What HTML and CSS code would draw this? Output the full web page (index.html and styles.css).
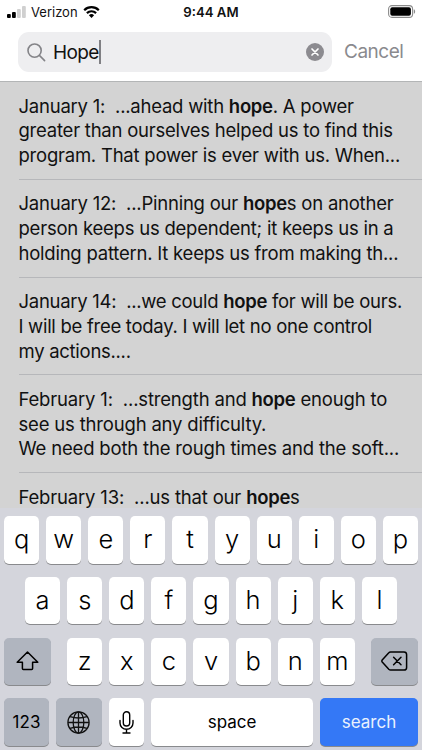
FILE: index.html
```html
<!DOCTYPE html>
<html lang="en">
<head>
<meta charset="utf-8">
<title>Search</title>
<link rel="stylesheet" href="styles.css">
</head>
<body>

<div class="phone">
  <header class="top">
    <div class="status-bar">
      <div class="carrier">
        <svg class="signal" width="19" height="12" viewBox="0 0 19 12">
          <rect x="0" y="8" width="3.8" height="4" rx="1"/>
          <rect x="5" y="6" width="3.8" height="6" rx="1"/>
          <rect x="10" y="3" width="3.8" height="9" rx="1" fill="#d0d0d0"/>
          <rect x="15" y="0" width="3.8" height="12" rx="1" fill="#d0d0d0"/>
        </svg>
        <span>Verizon</span>
        <svg class="wifi" width="17" height="12" viewBox="0 0 17 12">
          <path d="M1.2 4.2a10.4 10.4 0 0 1 14.6 0M3.9 7.1a6.6 6.6 0 0 1 9.2 0" fill="none" stroke="#000" stroke-width="2.2"/>
          <path d="M8.5 12 5.9 9.3a3.7 3.7 0 0 1 5.2 0z"/>
        </svg>
      </div>
      <div class="clock">9:44 AM</div>
      <svg class="battery" width="28" height="13" viewBox="0 0 28 13">
        <rect x=".6" y=".6" width="24" height="11.8" rx="3.4" fill="none" stroke="#8b8b8b" stroke-width="1.1"/>
        <rect x="2.3" y="2.3" width="20.6" height="8.4" rx="1.9"/>
        <path d="M25.8 4.2c1.8.6 1.8 4 0 4.6z" fill="#8b8b8b"/>
      </svg>
    </div>
    <div class="search-row">
      <div class="search-field">
        <svg class="magnifier" width="19" height="19" viewBox="0 0 19 19" fill="none" stroke="#848488" stroke-width="1.6" stroke-linecap="round">
          <circle cx="7.6" cy="7.6" r="6.6"/>
          <path d="M12.4 12.4 17.6 17.6"/>
        </svg>
        <span class="query">Hope</span>
        <span class="caret"></span>
        <svg class="clear" width="18" height="18" viewBox="0 0 18 18">
          <circle cx="9" cy="9" r="9" fill="#8c8b90"/>
          <path d="M6 6l6 6M12 6l-6 6" stroke="#fff" stroke-width="1.7" stroke-linecap="round"/>
        </svg>
      </div>
      <span class="cancel">Cancel</span>
    </div>
  </header>

  <main class="results">
    <p class="result">January 1:&nbsp; ...ahead with <b>hope</b>. A power<br>greater than ourselves helped us to find this<br>program. That power is ever with us. When...</p>
    <p class="result">January 12:&nbsp; ...Pinning our <b>hope</b>s on another<br>person keeps us dependent; it keeps us in a<br>holding pattern. It keeps us from making th...</p>
    <p class="result tight">January 14:&nbsp; ...we could <b>hope</b> for will be ours.<br>I will be free today. I will let no one control<br>my actions....</p>
    <p class="result loose">February 1:&nbsp; ...strength and <b>hope</b> enough to<br>see us through any difficulty.<br>We need both the rough times and the soft...</p>
    <p class="result loose">February 13:&nbsp; ...us that our <b>hope</b>s</p>
  </main>

  <div class="keyboard">
    <div class="keys">
      <span class="key">q</span><span class="key">w</span><span class="key">e</span><span class="key">r</span><span class="key">t</span><span class="key">y</span><span class="key">u</span><span class="key">i</span><span class="key">o</span><span class="key">p</span>
    </div>
    <div class="keys">
      <span class="key">a</span><span class="key">s</span><span class="key">d</span><span class="key">f</span><span class="key">g</span><span class="key">h</span><span class="key">j</span><span class="key">k</span><span class="key">l</span>
    </div>
    <div class="keys">
      <span class="key gray shift">
        <svg width="23" height="20" viewBox="0 0 23 20" fill="none" stroke="#000" stroke-width="1.5" stroke-linejoin="round">
          <path d="M11.5 1 1.2 11.3H6.4V17.6q0 1 1 1H15.6q1 0 1-1V11.3H21.8z"/>
        </svg>
      </span>
      <span class="key">z</span><span class="key">x</span><span class="key">c</span><span class="key">v</span><span class="key">b</span><span class="key">n</span><span class="key">m</span>
      <span class="key gray delete">
        <svg width="27" height="20" viewBox="0 0 27 20" fill="none" stroke="#000" stroke-width="1.5" stroke-linejoin="round" stroke-linecap="round">
          <path d="M9.5 1H23q2.6 0 2.6 2.6V16.4Q25.6 19 23 19H9.6Q8.6 19 7.8 18.2L1.2 11Q.5 10 1.2 9L7.8 1.8Q8.5 1 9.5 1z"/>
          <path d="M12.6 6.2l7.4 7.6M20 6.2l-7.4 7.6"/>
        </svg>
      </span>
    </div>
    <div class="keys">
      <span class="key gray numbers">123</span>
      <span class="key gray globe">
        <svg width="23" height="23" viewBox="0 0 23 23" fill="none" stroke="#111" stroke-width="1.3">
          <circle cx="11.5" cy="11.5" r="10.6"/>
          <ellipse cx="11.5" cy="11.5" rx="5.3" ry="10.6"/>
          <path d="M11.5 1V22M1 11.5H22M3.1 5.6Q11.5 8.4 19.9 5.6M3.1 17.4Q11.5 14.6 19.9 17.4"/>
        </svg>
      </span>
      <span class="key mic">
        <svg width="15" height="23" viewBox="0 0 15 23" fill="none" stroke="#000" stroke-width="1.4" stroke-linecap="round">
          <rect x="4.3" y=".8" width="6.4" height="14.2" rx="3.2"/>
          <path d="M1 9.5V12a6.5 6.2 0 0 0 13 0V9.5M7.5 18.3V22M4 22H11"/>
        </svg>
      </span>
      <span class="key space">space</span>
      <span class="key search">search</span>
    </div>
  </div>
</div>

</body>
</html>
```
FILE: styles.css
```css
* {
  box-sizing: border-box;
}
body {
  margin: 0;
  font-family: Inter, "Liberation Sans", sans-serif;
  color: #111;
}
.phone {
  display: flex;
  flex-direction: column;
  width: 422px;
  height: 750px;
  overflow: hidden;
  background: #d3d3d3;
}

/* status bar + search */
.top {
  height: 82px;
  flex: none;
  background: #fff;
  border-bottom: 1px solid #b3b5b6;
}
.status-bar {
  display: grid;
  grid-template-columns: 1fr auto 1fr;
  align-items: center;
  height: 24px;
  padding: 0 6px 0 7px;
}
.carrier {
  display: flex;
  align-items: center;
  gap: 5px;
  font-size: 13px;
}
.signal {
  margin-top: -1px;
}
.wifi {
  margin-top: -1px;
}
.clock {
  margin-left: -1px;
  font-size: 13.2px;
  font-weight: 600;
}
.battery {
  justify-self: end;
  margin-top: -2px;
}
.search-row {
  display: flex;
  align-items: center;
  margin-top: 8px;
  padding-left: 18px;
}
.search-field {
  display: flex;
  align-items: center;
  width: 314px;
  height: 40px;
  padding: 0 8px 0 9px;
  border-radius: 11px;
  background: #eeeef0;
}
.query {
  margin-left: 7px;
  font-size: 19px;
  letter-spacing: -0.6px;
}
.caret {
  width: 2px;
  height: 24px;
  background: #808084;
}
.clear {
  margin-left: auto;
}
.cancel {
  margin-left: 12px;
  margin-top: -1px;
  font-size: 19px;
  letter-spacing: -0.5px;
  color: #8a8a8e;
}

/* results */
.results {
  flex: none;
  height: 426px;
  overflow: hidden;
}
.result {
  height: 97.8px;
  margin: 0 0 0 18.5px;
  padding-top: 11.5px;
  border-bottom: 1px solid #b6b7ba;
  font-size: 18.5px;
  line-height: 24.8px;
  letter-spacing: -0.23px;
  white-space: nowrap;
}
.tight {
  letter-spacing: -0.28px;
}
.loose {
  letter-spacing: -0.18px;
}
.result b {
  font-weight: 600;
  letter-spacing: -0.3px;
}

/* keyboard */
.keyboard {
  flex: 1;
  display: flex;
  flex-direction: column;
  gap: 13.3px;
  padding: 8.3px 4px 0;
  background: #d4d5dc;
}
.keys {
  display: flex;
  justify-content: center;
  gap: 7px;
}
.key {
  display: flex;
  align-items: center;
  justify-content: center;
  width: 35.1px;
  height: 47.4px;
  padding-bottom: 2px;
  border-radius: 5px;
  background: #fff;
  box-shadow: 0 1px 0 #898a8d;
  font-size: 25.5px;
  font-weight: 350;
  color: #000;
}
.gray {
  background: #b0b5bf;
}
.shift,
.delete {
  width: 47px;
  padding-bottom: 0;
}
.shift {
  margin-right: 8.7px;
}
.delete {
  margin-left: 8.7px;
}
.numbers {
  width: 45px;
  padding-bottom: 0;
  font-size: 17px;
  font-weight: 400;
}
.globe {
  width: 46px;
  padding-bottom: 0;
}
.mic {
  padding-bottom: 0;
}
.space {
  width: 162px;
  padding-bottom: 0;
  font-size: 17px;
  font-weight: 400;
}
.search {
  width: 98px;
  padding-bottom: 0;
  font-size: 17px;
  font-weight: 400;
  background: #3478f6;
  color: #e9f1fe;
}
```
